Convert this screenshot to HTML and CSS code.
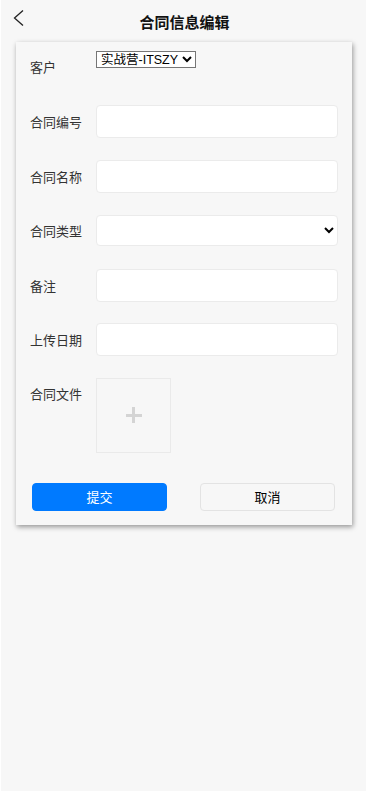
FILE: index.html
```html
<!DOCTYPE html>
<html lang="zh">

<head>
    <meta charset="UTF-8">
    <meta name="viewport" content="width=device-width, initial-scale=1.0">
    <title>合同信息编辑</title>
    <link rel="stylesheet" href="styles.css">
</head>

<body>
    <div class="page">
        <div class="header">
            <a class="back" href="#">
                <svg width="12" height="18" viewBox="0 0 12 18">
                    <polyline points="10,1.5 1.5,9 10,16.5" fill="none" stroke="#222" stroke-width="1.3" />
                </svg>
            </a>
            <h1>合同信息编辑</h1>
        </div>

        <div class="card">
            <div class="row customer">
                <label>客户</label>
                <select class="native">
                    <option>实战营-ITSZY</option>
                </select>
            </div>

            <div class="row">
                <label for="no">合同编号</label>
                <input type="text" id="no" class="field">
            </div>
            <div class="row">
                <label for="name">合同名称</label>
                <input type="text" id="name" class="field">
            </div>
            <div class="row">
                <label for="type">合同类型</label>
                <select id="type" class="field pick">
                    <option></option>
                </select>
            </div>
            <div class="row">
                <label for="memo">备注</label>
                <input type="text" id="memo" class="field">
            </div>
            <div class="row">
                <label for="date">上传日期</label>
                <input type="text" id="date" class="field">
            </div>
            <div class="row file">
                <label>合同文件</label>
                <div class="upload"><span class="plus"></span></div>
            </div>

            <div class="actions">
                <button class="btn submit">提交</button>
                <button class="btn cancel">取消</button>
            </div>
        </div>
    </div>
</body>

</html>
```

FILE: styles.css
```css
html {
    background: #fff;
}

body {
    margin: 0;
    font-family: "Liberation Sans", "Noto Sans CJK SC", sans-serif;
    color: #333;
}

.page {
    margin-left: 1px;
    height: 791px;
    background: #f7f7f7;
    overflow: hidden;
}

.header {
    height: 42px;
    display: flex;
    align-items: center;
    justify-content: center;
    position: relative;
}

.back {
    position: absolute;
    left: 12px;
    top: 9px;
    display: flex;
}

.header h1 {
    margin: 0;
    font-size: 15px;
    font-weight: bold;
    color: #111;
    padding-left: 2px;
}

.card {
    margin: 0 14px 0 15px;
    padding: 9px 14px 14px 14px;
    background: #f7f7f7;
    box-shadow: 1px 2px 5px rgba(0, 0, 0, 0.4);
}

.row {
    display: flex;
    align-items: center;
    height: 33px;
    margin-top: 21.5px;
}

.row label {
    width: 66px;
    flex-shrink: 0;
    font-size: 13px;
    color: #333;
}

.row.customer {
    margin-top: 0;
    height: auto;
    align-items: flex-start;
    margin-bottom: 29px;
}

.customer label {
    padding-top: 6px;
}

.native {
    font-family: "Liberation Sans", "Noto Sans CJK SC", sans-serif;
    font-size: 12.5px;
    height: 17px;
    padding: 0;
    border: 1px solid #767676;
    background: #fff;
    color: #000;
    border-radius: 0;
}

.field {
    flex: 1;
    height: 33px;
    box-sizing: border-box;
    border: 1px solid #ebebeb;
    border-radius: 4px;
    background: #fff;
    font-size: 13px;
    padding: 0 8px;
    outline: none;
}

.pick {
    height: 31px;
    color: #000;
}

.row.file {
    height: auto;
    align-items: flex-start;
}

.file label {
    padding-top: 6px;
}

.upload {
    width: 75px;
    height: 75px;
    box-sizing: border-box;
    border: 1px solid #eaeaea;
    display: flex;
    align-items: center;
    justify-content: center;
}

.plus {
    width: 16px;
    height: 16px;
    position: relative;
}

.plus:before,
.plus:after {
    content: "";
    position: absolute;
    background: #d4d4d4;
}

.plus:before {
    left: 0;
    top: 6.5px;
    width: 16px;
    height: 3px;
}

.plus:after {
    top: 0;
    left: 6.5px;
    width: 3px;
    height: 16px;
}

.actions {
    display: flex;
    justify-content: space-between;
    margin-top: 30px;
    padding: 0 3px 0 2px;
}

.btn {
    width: 135px;
    height: 28px;
    border-radius: 4px;
    font-size: 13px;
    font-family: "Liberation Sans", "Noto Sans CJK SC", sans-serif;
    cursor: pointer;
}

.submit {
    background: #007aff;
    border: 1px solid #007aff;
    color: #fff;
}

.cancel {
    background: #f7f7f7;
    border: 1px solid #e3e3e3;
    color: #000;
}
```
